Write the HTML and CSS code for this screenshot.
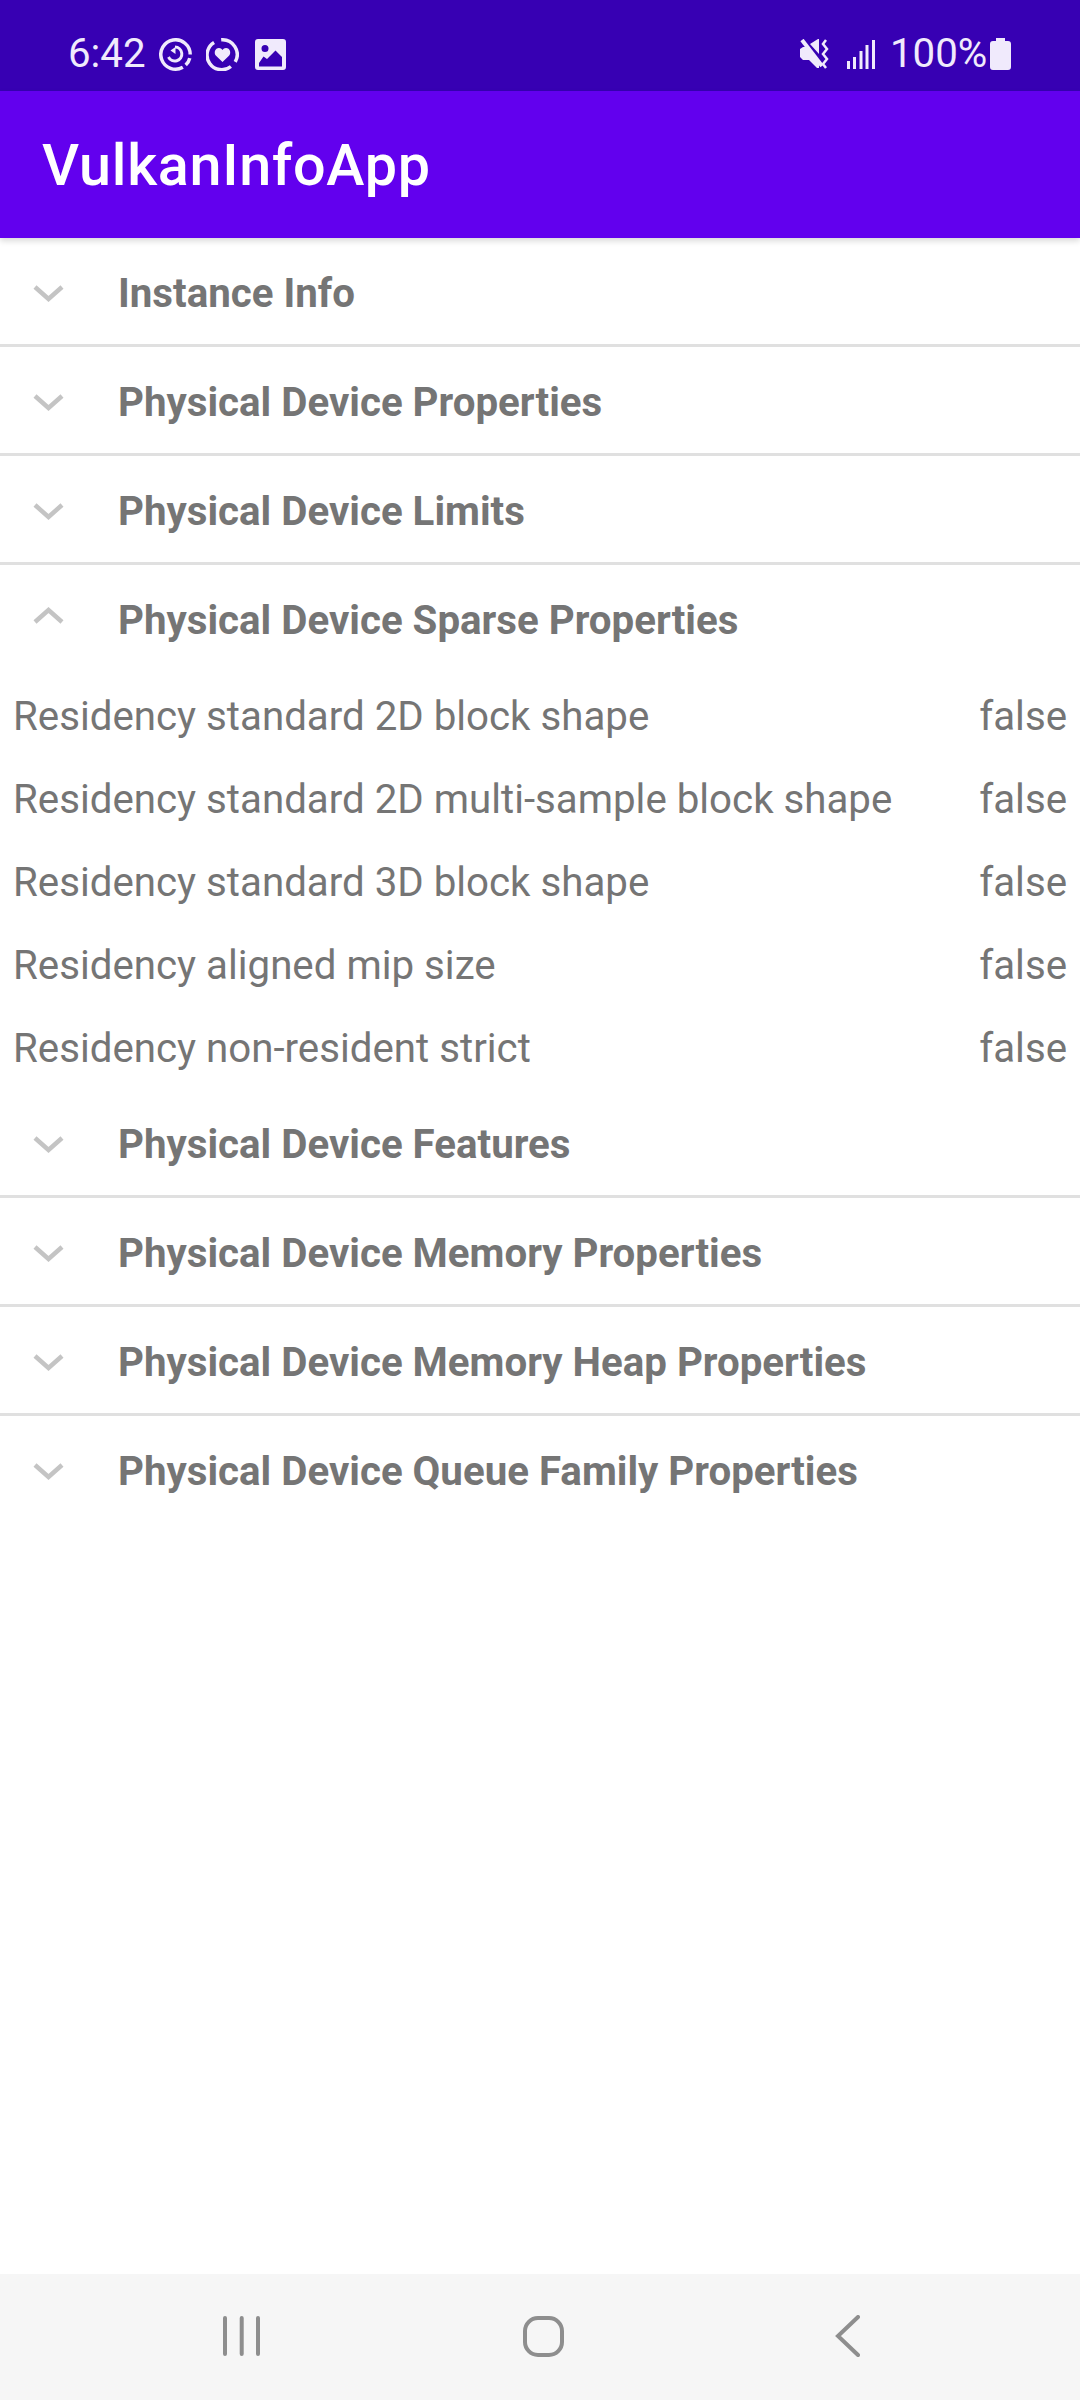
FILE: index.html
```html
<!DOCTYPE html>
<html lang="en">
<head>
  <meta charset="UTF-8">
  <title>VulkanInfoApp</title>
  <link rel="stylesheet" href="styles.css">
</head>
<body>
  <div class="phone">
    <div class="status-bar">
      <span class="clock">6:42</span>
      <svg class="ring" viewBox="0 0 33 33">
        <path d="M23.85 29.2A14.7 14.7 0 1 1 31.2 16.5M30.76 20.06A14.7 14.7 0 0 1 26.7 27.1" />
        <path class="thin" d="M9.5 19A7 7 0 1 0 16 9" />
        <path class="solid" d="M16.5 9L11.5 12.5L16.5 16Z" />
      </svg>
      <svg class="ring" viewBox="0 0 33 33">
        <path d="M15.2 1.86A14.7 14.7 0 0 1 29.2 23.85M24.9 28.5A14.7 14.7 0 1 1 8.07 4.46" />
        <path class="solid" d="M16.5 24L10 17.8C7.5 15 9 10 13 10C14.5 10 15.7 10.8 16.5 12C17.3 10.8 18.5 10 20 10C24 10 25.5 15 23 17.8Z" />
      </svg>
      <svg class="picture" viewBox="0 0 31 31">
        <path fill-rule="evenodd" d="M3 0H28A3 3 0 0 1 31 3V28A3 3 0 0 1 28 31H3A3 3 0 0 1 0 28V3A3 3 0 0 1 3 0ZM10 6A3.5 3.5 0 1 0 10 13A3.5 3.5 0 1 0 10 6ZM4 24V27.5H27V18L20.5 11.5L12 20L8.5 17.5Z" />
      </svg>
      <div class="status-right">
        <svg class="mute" viewBox="0 0 30 30">
          <path class="solid" d="M0 10L3 8H6L19 22V29L17 29L9 21H3L0 18ZM10 5L18 0H19V15Z" />
          <path class="cut" d="M2 1L22 27" />
          <path class="wave" d="M26 1L23 5L27 10L23 15L27 20L23 25L26 29" />
        </svg>
        <svg class="signal" viewBox="0 0 28 29">
          <rect x="0" y="21" width="3" height="8" />
          <rect x="6" y="17" width="3" height="12" />
          <rect x="12.5" y="11" width="3" height="18" />
          <rect x="18.5" y="5" width="3" height="24" />
          <rect x="25" y="0" width="3" height="29" />
        </svg>
        <span class="battery-text">100%</span>
        <svg class="battery" viewBox="0 0 21 32">
          <path d="M6 0H15V3H18A3 3 0 0 1 21 6V29A3 3 0 0 1 18 32H3A3 3 0 0 1 0 29V6A3 3 0 0 1 3 3H6Z" />
        </svg>
      </div>
    </div>

    <header class="app-bar">VulkanInfoApp</header>

    <main class="list">
      <div class="group-row has-line">
        <svg class="chevron" viewBox="0 0 31 17"><path d="M2 2L15.5 14L29 2" /></svg>
        <span>Instance Info</span>
      </div>
      <div class="group-row has-line">
        <svg class="chevron" viewBox="0 0 31 17"><path d="M2 2L15.5 14L29 2" /></svg>
        <span>Physical Device Properties</span>
      </div>
      <div class="group-row has-line">
        <svg class="chevron" viewBox="0 0 31 17"><path d="M2 2L15.5 14L29 2" /></svg>
        <span>Physical Device Limits</span>
      </div>
      <div class="group-row">
        <svg class="chevron chevron-up" viewBox="0 0 31 17"><path d="M2 15L15.5 3L29 15" /></svg>
        <span>Physical Device Sparse Properties</span>
      </div>
      <div class="details">
        <div class="detail-row"><span>Residency standard 2D block shape</span><span>false</span></div>
        <div class="detail-row"><span>Residency standard 2D multi-sample block shape</span><span>false</span></div>
        <div class="detail-row"><span>Residency standard 3D block shape</span><span>false</span></div>
        <div class="detail-row"><span>Residency aligned mip size</span><span>false</span></div>
        <div class="detail-row"><span>Residency non-resident strict</span><span>false</span></div>
      </div>
      <div class="group-row has-line">
        <svg class="chevron" viewBox="0 0 31 17"><path d="M2 2L15.5 14L29 2" /></svg>
        <span>Physical Device Features</span>
      </div>
      <div class="group-row has-line">
        <svg class="chevron" viewBox="0 0 31 17"><path d="M2 2L15.5 14L29 2" /></svg>
        <span>Physical Device Memory Properties</span>
      </div>
      <div class="group-row has-line">
        <svg class="chevron" viewBox="0 0 31 17"><path d="M2 2L15.5 14L29 2" /></svg>
        <span>Physical Device Memory Heap Properties</span>
      </div>
      <div class="group-row">
        <svg class="chevron" viewBox="0 0 31 17"><path d="M2 2L15.5 14L29 2" /></svg>
        <span>Physical Device Queue Family Properties</span>
      </div>
    </main>

    <nav class="nav-bar">
      <svg class="nav-recent" viewBox="0 0 38 40">
        <path d="M2 2V38M18.7 2V38M35 2V38" />
      </svg>
      <svg class="nav-home" viewBox="0 0 41 41">
        <rect x="2" y="2" width="37" height="37" rx="13" />
      </svg>
      <svg class="nav-back" viewBox="0 0 25 42">
        <path d="M23 2L3 21L23 40" />
      </svg>
    </nav>
  </div>
</body>
</html>
```

FILE: styles.css
```css
* {
  box-sizing: border-box;
}
body {
  margin: 0;
  font-family: Roboto, "Noto Sans", sans-serif;
  background-color: white;
}
.phone {
  width: 1080px;
  height: 2400px;
  display: flex;
  flex-direction: column;
  overflow: hidden;
}

/* status bar */
.status-bar {
  height: 91px;
  flex: none;
  display: flex;
  align-items: center;
  padding: 0 69px 0 68px;
  background-color: #3700b3;
  color: #f0eafc;
}
.status-bar svg {
  flex: none;
  fill: #f0eafc;
}
.clock,
.battery-text {
  font-size: 40.25px;
  line-height: 46px;
  height: 46px;
  margin-top: 17px;
}
.clock {
  width: 91px;
}
.status-bar .ring {
  width: 33px;
  height: 33px;
  margin-top: 17px;
  margin-right: 14px;
  fill: none;
  stroke: #f0eafc;
  stroke-width: 3.5;
}
.ring .thin {
  stroke-width: 3;
}
.ring .solid {
  fill: #f0eafc;
  stroke: none;
}
.picture {
  width: 31px;
  height: 31px;
  margin-top: 17px;
  margin-left: 2px;
}
.status-right {
  margin-left: auto;
  display: flex;
  align-items: center;
}
.mute {
  width: 30px;
  height: 30px;
  margin-top: 17px;
}
.mute .cut {
  fill: none;
  stroke: #f0eafc;
  stroke-width: 4;
}
.mute .wave {
  fill: none;
  stroke: #f0eafc;
  stroke-width: 2.5;
}
.signal {
  width: 28px;
  height: 29px;
  margin: 17px 0 0 17px;
}
.battery-text {
  margin-left: 15px;
  width: 100px;
}
.battery {
  width: 21px;
  height: 32px;
  margin-top: 17px;
}

/* app bar */
.app-bar {
  height: 147px;
  flex: none;
  padding: 40px 0 0 42px;
  background-color: #6200ee;
  color: white;
  font-size: 57.5px;
  line-height: 70px;
  font-weight: 500;
  letter-spacing: 0.72px;
  box-shadow: 0 3px 6px rgba(0,0,0,0.15);
  position: relative;
}

/* list */
.list {
  flex: 1;
}
.group-row {
  height: 109px;
  display: flex;
  align-items: center;
  padding: 4px 0 3px 33px;
  color: #757575;
  font-size: 40.25px;
  font-weight: 700;
}
.has-line {
  border-bottom: 3px solid #e0e0e0;
  padding-bottom: 0;
}
.chevron {
  width: 31px;
  height: 17px;
  flex: none;
  margin-right: 54px;
  fill: none;
  stroke: #c4c4c4;
  stroke-width: 4.5;
}
.chevron-up {
  margin-bottom: 10px;
}
.detail-row {
  height: 83px;
  display: flex;
  justify-content: space-between;
  align-items: center;
  padding: 2px 13px 0;
  color: #757575;
  font-size: 40.25px;
}

/* nav bar */
.nav-bar {
  height: 126px;
  flex: none;
  display: flex;
  align-items: center;
  background-color: #f6f6f6;
  padding: 0 0 2px 223px;
}
.nav-bar svg {
  flex: none;
  fill: none;
  stroke: #8e8e8e;
  stroke-width: 4;
  stroke-linecap: round;
}
.nav-recent {
  width: 38px;
  height: 40px;
}
.nav-home {
  width: 41px;
  height: 41px;
  margin-left: 262px;
}
.nav-back {
  width: 25px;
  height: 42px;
  margin-left: 271px;
}
```
